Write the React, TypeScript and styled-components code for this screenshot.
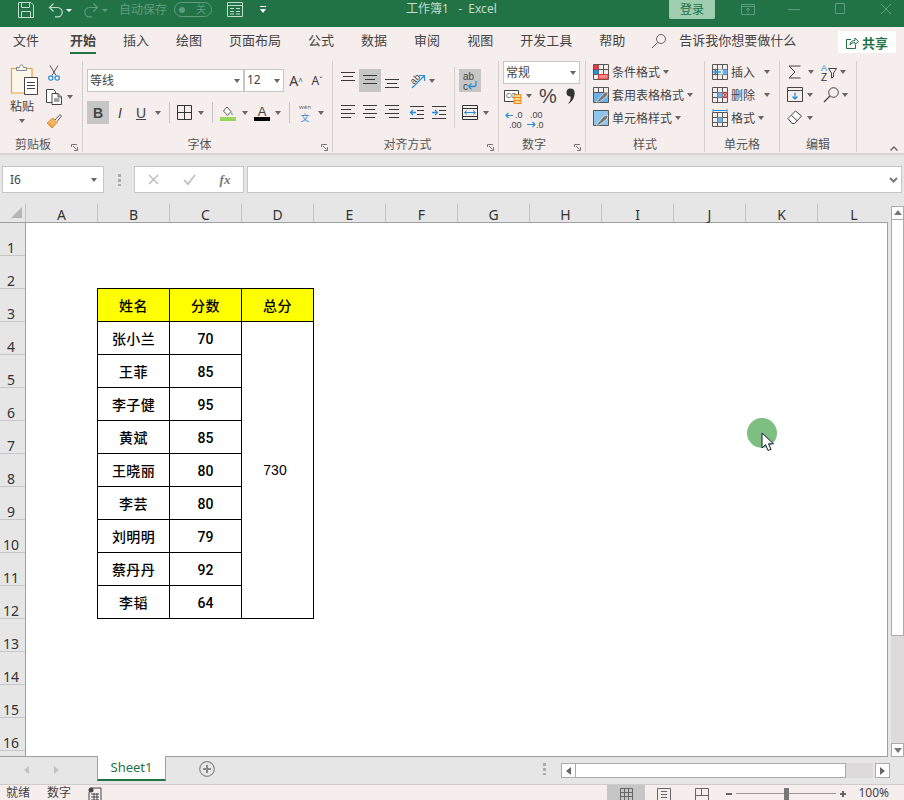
import React from "react";
import styled, { createGlobalStyle } from "styled-components";

const GREEN = "#217346";
const PINK = "#f6eded";
const GRAY = "#e6e6e6";
const LINE = "#9f9f9f";
const SOFT = "#c6c6c6";
const INK = "#3c3c3c";
const BLUE = "#2b8fd6";

const GlobalStyle = createGlobalStyle`
  html, body { margin: 0; padding: 0; background: ${GRAY}; }
  * { box-sizing: border-box; }
  body { font-family: "Noto Sans", "Noto Sans CJK SC", sans-serif; }
`;

const Page = styled.div`
  position: relative;
  width: 904px;
  height: 800px;
  overflow: hidden;
  display: flex;
  flex-direction: column;
  background: ${GRAY};
`;

const Icon = styled.svg`
  display: block;
  flex: none;
  fill: none;
  overflow: visible;
`;

/* ---------- title bar ---------- */
const TitleBar = styled.header`
  height: 27px;
  flex: none;
  display: flex;
  background: ${GREEN};
  padding-left: 18px;
`;
const Quick = styled.span<{ $ml?: number }>`
  height: 19px;
  margin-left: ${(p) => p.$ml ?? 0}px;
  display: flex;
  align-items: center;
  flex: none;
`;
const TitleCaret = styled.span<{ $ml: number; $faint?: boolean }>`
  margin: 9px 0 0 ${(p) => p.$ml}px;
  width: 0;
  height: 0;
  flex: none;
  border-left: 3px solid transparent;
  border-right: 3px solid transparent;
  border-top: 3px solid ${(p) => (p.$faint ? "#5f9b7d" : "#ffffff")};
`;
const AutoSave = styled.span`
  margin-left: 11px;
  font-size: 12px;
  line-height: 19px;
  color: #5f9b7d;
`;
const Toggle = styled.span`
  margin: 2px 0 0 7px;
  width: 38px;
  height: 15px;
  border: 1px solid #5f9b7d;
  border-radius: 8px;
  display: flex;
  align-items: center;
  justify-content: space-between;
  padding: 0 5px 0 4px;
  font-size: 10px;
  line-height: 13px;
  color: #5f9b7d;
  &::before {
    content: "";
    width: 6px;
    height: 6px;
    border-radius: 50%;
    background: #5f9b7d;
  }
`;
const CustomizeCaret = styled.span`
  margin: 6px 0 0 17px;
  width: 6px;
  height: 7px;
  flex: none;
  border-top: 1px solid #fff;
  position: relative;
  &::after {
    content: "";
    position: absolute;
    left: 0;
    top: 2px;
    border-left: 3px solid transparent;
    border-right: 3px solid transparent;
    border-top: 4px solid #fff;
  }
`;
const DocTitle = styled.span`
  margin-left: 140px;
  font-size: 12px;
  line-height: 17px;
  color: #c4dacd;
  white-space: pre;
`;
const WindowControls = styled.div`
  margin-left: auto;
  display: flex;
  align-items: flex-start;
`;
const Login = styled.span`
  width: 46px;
  height: 19px;
  background: #9fcdb0;
  border-radius: 0 0 2px 2px;
  color: ${GREEN};
  font-size: 12px;
  line-height: 19px;
  text-align: center;
`;

/* ---------- tabs ---------- */
const TabRow = styled.nav`
  height: 31px;
  flex: none;
  background: ${PINK};
  display: flex;
  padding: 0 8px 0 13px;
  align-items: flex-start;
`;
const MenuTab = styled.span<{ $active?: boolean; $mr?: number }>`
  margin-right: ${(p) => p.$mr ?? 27}px;
  height: 27px;
  font-size: 13px;
  line-height: 26px;
  color: #444;
  font-weight: ${(p) => (p.$active ? 700 : 400)};
  border-bottom: ${(p) => (p.$active ? `2px solid ${GREEN}` : "0")};
  white-space: nowrap;
`;
const Hint = styled.span`
  margin-left: 12px;
  font-size: 13px;
  line-height: 26px;
  color: #444;
`;
const ShareButton = styled.span`
  margin: 4px 0 0 auto;
  width: 58px;
  height: 22px;
  background: #fff;
  border-radius: 2px;
  display: flex;
  align-items: center;
  justify-content: center;
  gap: 3px;
  font-size: 13px;
  font-weight: 700;
  color: ${GREEN};
`;

/* ---------- ribbon ---------- */
const Ribbon = styled.section`
  height: 97px;
  flex: none;
  background: ${PINK};
  border-bottom: 2px solid #d8d4d3;
  display: flex;
  padding-top: 3px;
`;
const Group = styled.div<{ $w: number }>`
  width: ${(p) => p.$w}px;
  height: 91px;
  flex: none;
  display: flex;
  flex-direction: column;
  border-right: 1px solid #d3cfcf;
`;
const GroupBody = styled.div<{ $pt?: number; $pl?: number }>`
  flex: 1;
  min-height: 0;
  padding: ${(p) => p.$pt ?? 0}px 0 0 ${(p) => p.$pl ?? 0}px;
`;
const GroupFoot = styled.div`
  height: 15px;
  flex: none;
  display: flex;
  font-size: 12px;
  line-height: 16px;
  color: #555;
`;
const GroupName = styled.span`
  flex: 1;
  text-align: center;
`;
const Launcher = styled.span`
  width: 16px;
  padding: 7px 4px 0 5px;
`;
const Row = styled.div<{ $h?: number; $mb?: number }>`
  display: flex;
  align-items: center;
  height: ${(p) => p.$h ?? 23}px;
  margin-bottom: ${(p) => p.$mb ?? 0}px;
`;
const Btn = styled.span<{ $w: number; $on?: boolean; $ml?: number }>`
  width: ${(p) => p.$w}px;
  height: 23px;
  margin-left: ${(p) => p.$ml ?? 0}px;
  flex: none;
  display: flex;
  align-items: center;
  justify-content: center;
  background: ${(p) => (p.$on ? SOFT : "transparent")};
  color: ${INK};
`;
const Caret = styled.span<{ $w: number }>`
  width: ${(p) => p.$w}px;
  flex: none;
  display: flex;
  justify-content: center;
  &::after {
    content: "";
    border-left: 3.5px solid transparent;
    border-right: 3.5px solid transparent;
    border-top: 4px solid #666;
  }
`;
const Sep = styled.span<{ $l: number; $r: number }>`
  width: 1px;
  height: 21px;
  flex: none;
  margin: 0 ${(p) => p.$r}px 0 ${(p) => p.$l}px;
  background: ${SOFT};
`;
const Field = styled.span<{ $w: number; $ml?: number }>`
  width: ${(p) => p.$w}px;
  height: 23px;
  margin-left: ${(p) => p.$ml ?? 0}px;
  flex: none;
  background: #fff;
  border: 1px solid ${SOFT};
  display: flex;
  align-items: center;
  justify-content: space-between;
  padding: 0 3px 2px 2px;
  font-size: 12px;
  color: #444;
  &::after {
    content: "";
    margin-top: 2px;
    border-left: 3.5px solid transparent;
    border-right: 3.5px solid transparent;
    border-top: 4px solid #666;
  }
`;
const GrowLetter = styled.span<{ $size: number }>`
  font-size: ${(p) => p.$size}px;
  line-height: 1;
`;
const Glyph = styled.span<{ $bold?: boolean; $italic?: boolean; $under?: boolean }>`
  font-family: "Liberation Sans", sans-serif;
  font-size: 14px;
  font-weight: ${(p) => (p.$bold ? 700 : 400)};
  font-style: ${(p) => (p.$italic ? "italic" : "normal")};
  text-decoration: ${(p) => (p.$under ? "underline" : "none")};
  color: #444;
`;
const ClipWrap = styled.div`
  display: flex;
  height: 76px;
`;
const PasteCol = styled.div`
  width: 46px;
  padding: 3px 0 0 11px;
  flex: none;
`;
const PasteText = styled.div`
  margin: 4px 0 4px -1px;
  font-size: 12px;
  line-height: 16px;
  color: #444;
`;
const PasteCaret = styled(Caret)`
  margin-left: -1px;
`;
const ClipTools = styled.div`
  padding-top: 3px;
  display: flex;
  flex-direction: column;
  gap: 7px;
`;
const ClipRow = styled.div`
  display: flex;
  align-items: center;
  height: 17px;
`;
const AlignWrap = styled.div`
  display: flex;
`;
const AlignMain = styled.div`
  width: 117px;
  flex: none;
`;
const WrapCol = styled.div`
  margin-top: -2px;
  padding: 2px 0 0 4px;
  height: 61px;
  border-left: 1px solid #d3cfcf;
`;
const StyleRow = styled.div<{ $pl?: number }>`
  display: flex;
  align-items: center;
  height: 23px;
  padding-left: ${(p) => p.$pl ?? 7}px;
  padding-bottom: 2px;
  font-size: 12px;
  color: #444;
  white-space: nowrap;
`;
const StyleLabel = styled.span`
  margin-left: 3px;
`;
const Percent = styled.span`
  font-family: "Liberation Sans", sans-serif;
  font-size: 20px;
  color: #444;
`;
const RibbonEnd = styled.div`
  flex: 1;
  display: flex;
  justify-content: flex-end;
  padding: 85px 6px 0 0;
`;

/* ---------- formula bar ---------- */
const FormulaBar = styled.div`
  height: 49px;
  flex: none;
  padding: 11px 2px 0;
  display: flex;
  align-items: flex-start;
`;
const Box = styled.div<{ $w?: number; $ml?: number }>`
  height: 27px;
  ${(p) => (p.$w ? `width: ${p.$w}px; flex: none;` : "flex: 1;")}
  margin-left: ${(p) => p.$ml ?? 0}px;
  background: #fff;
  border: 1px solid ${SOFT};
  display: flex;
  align-items: center;
`;
const NameText = styled.span`
  margin-left: 7px;
  font-size: 12px;
  color: #444;
`;
const BoxCaret = styled(Caret)`
  margin-left: auto;
`;
const BoxChevron = styled.span`
  margin-left: auto;
  padding-right: 3px;
`;
const Dots = styled.span<{ $ml: number }>`
  margin-left: ${(p) => p.$ml}px;
  width: 3px;
  height: 13px;
  flex: none;
  background: radial-gradient(circle at 50% 50%, #aaa 1.4px, transparent 1.6px) 0 0 / 3px 5px repeat-y;
`;
const FormulaDots = styled(Dots)`
  margin-top: 7px;
`;
const FxSlot = styled.span<{ $w: number }>`
  width: ${(p) => p.$w}px;
  display: flex;
  justify-content: center;
  flex: none;
`;
const FxText = styled.span`
  font-family: "Liberation Serif", serif;
  font-style: italic;
  font-size: 13px;
  font-weight: 700;
  color: #777;
`;

/* ---------- grid ---------- */
const Work = styled.div`
  height: 553px;
  flex: none;
  display: flex;
`;
const GridSide = styled.div`
  width: 888px;
  flex: none;
  display: flex;
  flex-direction: column;
  border-bottom: 1px solid ${LINE};
`;
const ColHeads = styled.div`
  height: 19px;
  flex: none;
  display: flex;
  border-bottom: 1px solid ${LINE};
`;
const Corner = styled.div`
  width: 26px;
  flex: none;
  padding: 3px 0 0 11px;
  border-right: 1px solid ${SOFT};
`;
const ColHead = styled.div<{ $last?: boolean }>`
  width: 72px;
  flex: none;
  text-align: center;
  font-size: 14px;
  line-height: 22px;
  color: #333;
  border-right: ${(p) => (p.$last ? "0" : `1px solid ${SOFT}`)};
`;
const GridBody = styled.div`
  flex: 1;
  min-height: 0;
  display: flex;
  overflow: hidden;
`;
const RowHeads = styled.div`
  width: 26px;
  flex: none;
  border-right: 1px solid ${LINE};
`;
const RowHead = styled.div`
  height: 33px;
  border-bottom: 1px solid ${SOFT};
  display: flex;
  align-items: flex-end;
  justify-content: center;
  padding-right: 3px;
  font-size: 14px;
  line-height: 15px;
  color: #333;
`;
const Sheet = styled.main`
  flex: 1;
  background: #fff;
  border-right: 1px solid ${LINE};
  padding: 65px 0 0 71px;
`;
const DataTable = styled.div`
  width: 217px;
  display: grid;
  grid-template-columns: repeat(3, 71px);
  grid-auto-rows: 32px;
  gap: 1px;
  padding: 1px;
  background: #000;
`;
const Cell = styled.div<{ $head?: boolean; $num?: boolean }>`
  background: ${(p) => (p.$head ? "#ffff00" : "#fff")};
  display: flex;
  align-items: center;
  justify-content: center;
  padding-top: ${(p) => (p.$num ? 1 : 0)}px;
  font-family: ${(p) =>
    p.$num ? 'Roboto, "Liberation Sans", sans-serif' : '"Noto Sans CJK SC", sans-serif'};
  font-size: 14px;
  font-weight: 500;
  letter-spacing: ${(p) => (p.$num ? 0 : "0.4px")};
  color: #000;
`;
const TotalCell = styled.div`
  grid-column: 3;
  grid-row: 2 / span 9;
  background: #fff;
  display: flex;
  align-items: center;
  justify-content: center;
  padding-right: 5px;
  font-family: "Liberation Sans", sans-serif;
  font-size: 14px;
  color: #000;
`;
const VScroll = styled.div`
  width: 13px;
  margin-left: 3px;
  flex: none;
  padding-top: 2px;
  display: flex;
  flex-direction: column;
`;
const VBtn = styled.div`
  height: 14px;
  flex: none;
  background: #fff;
  border: 1px solid #ababab;
  display: flex;
  align-items: center;
  justify-content: center;
  color: #777;
`;
const VThumb = styled.div`
  height: 416px;
  flex: none;
  background: #fff;
  border: 1px solid #ababab;
  border-width: 0 1px 1px;
`;
const VTrack = styled.div`
  flex: 1;
  background: #dcdadb;
`;

/* ---------- sheet tabs ---------- */
const SheetBar = styled.div`
  height: 28px;
  flex: none;
  display: flex;
  align-items: flex-start;
  border-bottom: 1px solid #cfcbca;
`;
const SheetNav = styled.div`
  width: 97px;
  flex: none;
  display: flex;
  justify-content: center;
  gap: 22px;
  padding: 9px 13px 0 0;
`;
const SheetTab = styled.div`
  width: 69px;
  height: 25px;
  margin-top: -1px;
  flex: none;
  background: #fff;
  border: 1px solid ${LINE};
  border-width: 0 1px;
  border-bottom: 2px solid ${GREEN};
  color: ${GREEN};
  font-size: 13px;
  line-height: 23px;
  text-align: center;
`;
const PlusCircle = styled.span`
  margin: 4px 0 0 33px;
  flex: none;
`;
const HScroll = styled.div`
  margin: 6px 14px 0 0;
  width: 329px;
  height: 15px;
  flex: none;
  display: flex;
`;
const HBtn = styled.span`
  width: 15px;
  flex: none;
  background: #fff;
  border: 1px solid #ababab;
  display: flex;
  align-items: center;
  justify-content: center;
`;
const HThumb = styled.span`
  width: 270px;
  flex: none;
  background: #fff;
  border: 1px solid #ababab;
  border-left-width: 0;
`;
const HTrack = styled.span`
  flex: 1;
  margin-right: 2px;
  background: #dcdadb;
`;
const SheetDots = styled(Dots)`
  margin: 5px 15px 0 auto;
`;

/* ---------- status bar ---------- */
const StatusBar = styled.footer`
  flex: 1;
  min-height: 0;
  overflow: hidden;
  background: ${PINK};
  display: flex;
  padding-left: 6px;
  font-size: 12px;
  line-height: 15px;
  color: #444;
`;
const StatusItem = styled.span<{ $ml?: number }>`
  margin-left: ${(p) => p.$ml ?? 0}px;
`;
const ViewSlot = styled.span<{ $on?: boolean; $first?: boolean }>`
  width: 38px;
  margin-left: ${(p) => (p.$first ? "auto" : "0")};
  flex: none;
  display: flex;
  justify-content: center;
  padding-top: 3px;
  background: ${(p) => (p.$on ? SOFT : "transparent")};
`;
const ZoomMark = styled.span<{ $ml: number; $plus?: boolean }>`
  margin: 8px 0 0 ${(p) => p.$ml}px;
  width: 6px;
  height: 2px;
  background: #666;
  flex: none;
  position: relative;
  &::after {
    content: "";
    display: ${(p) => (p.$plus ? "block" : "none")};
    position: absolute;
    left: 2px;
    top: -2px;
    width: 2px;
    height: 6px;
    background: #666;
  }
`;
const ZoomTrack = styled.span`
  margin: 8px 0 0 4px;
  width: 100px;
  height: 1px;
  background: #999;
  flex: none;
  position: relative;
`;
const ZoomThumb = styled.span`
  position: absolute;
  left: 48px;
  top: -5px;
  width: 5px;
  height: 12px;
  background: #777;
`;
const ZoomValue = styled.span`
  margin: 0 15px 0 12px;
  font-size: 12px;
`;

/* ---------- recorded pointer over the sheet ---------- */
const Pointer = styled.div`
  position: absolute;
  left: 747px;
  top: 418px;
  width: 30px;
  height: 30px;
  border-radius: 50%;
  background: #7dbf80;
`;
const Arrow = styled(Icon)`
  position: absolute;
  left: 761px;
  top: 432px;
`;

/* ---------- drawings ---------- */
const tq = "#c5dacf";
const faint = "#5f9b7d";

const SaveIcon = () => (
  <Icon width={16} height={16} viewBox="0 0 16 16" stroke={tq}>
    <path d="M.5.5h12.500l2.500 2.500v12.500H.5z" />
    <path d="M3.500.5v5h8v-5M3.500 15.500v-6h9v6" />
  </Icon>
);
const UndoIcon = ({ color = tq, flip = false }: { color?: string; flip?: boolean }) => (
  <Icon width={16} height={16} viewBox="0 0 16 16" stroke={color} strokeWidth={1.2}
    transform={flip ? "scale(-1 1)" : undefined}>
    <path d="M5.500 1.500 1.500 5.500l4 4M2 5.500h7.500a4.700 4.700 0 0 1 0 9.400H7" />
  </Icon>
);
const LayoutIcon = () => (
  <Icon width={16} height={15} viewBox="0 0 16 15" stroke={tq}>
    <path d="M.5.500h15v14H.5zM.5 3.500h15M3 6.500h4M9 6.500h4M3 9.500h4M9 9.500h4M3 12h4M9 12h4" />
  </Icon>
);
const RibbonModeIcon = () => (
  <Icon width={14} height={13} viewBox="0 0 14 13" stroke={faint}>
    <path d="M.5 1.500h13v10H.5zM.5 3.500h13M7 10V5.500M5 7l2-2 2 2" />
  </Icon>
);
const MinIcon = () => (
  <Icon width={14} height={19} viewBox="0 0 14 19" stroke={faint}><path d="M1 9.500h12" /></Icon>
);
const MaxIcon = () => (
  <Icon width={14} height={19} viewBox="0 0 14 19" stroke={faint}><path d="M2.500 3.500h9v10h-9z" /></Icon>
);
const CloseIcon = () => (
  <Icon width={14} height={19} viewBox="0 0 14 19" stroke={faint}><path d="m2 4 10 10M12 4 2 14" /></Icon>
);
const SearchIcon = () => (
  <Icon width={16} height={16} viewBox="0 0 16 16" stroke="#666" style={{ marginTop: 6 }}>
    <circle cx="10" cy="6" r="4.500" />
    <path d="M6.500 9.500 1 15" />
  </Icon>
);
const ShareIcon = () => (
  <Icon width={13} height={13} viewBox="0 0 13 13" stroke={GREEN}>
    <path d="M5 3.500H.5v9h9V9M4 9c0-3 2-4.500 5-4.500V2l3.500 3.500L9 8.500V6.500C6.500 6.500 5 7.500 4 9z" />
  </Icon>
);
const PasteIcon = () => (
  <Icon width={28} height={31} viewBox="0 0 28 31">
    <path d="M.5 4.500h20.500v24.500H.5z" stroke="#e8a33d" strokeWidth={1.2} fill="#fdf6ea" />
    <path d="M5.500 6.500V3.500h3c0-3.500 4-3.500 4 0h3v3z" stroke="#888" fill="#f4f4f4" />
    <path d="M13.500 13.500h13v17h-13z" stroke="#444" fill="#fff" />
    <path d="M16 18.500h8M16 21.500h8M16 24.500h8" stroke="#444" />
  </Icon>
);
const CutIcon = () => (
  <Icon width={12} height={16} viewBox="0 0 12 16" style={{ marginLeft: 2 }}>
    <path d="M2 .5 8 10.500M10 .5 4 10.500" stroke="#555" />
    <circle cx="2.800" cy="13" r="2.200" stroke={BLUE} strokeWidth={1.2} />
    <circle cx="9.200" cy="13" r="2.200" stroke={BLUE} strokeWidth={1.2} />
  </Icon>
);
const CopyIcon = () => (
  <Icon width={16} height={16} viewBox="0 0 16 16" stroke="#444">
    <path d="M.5.500h7l2 2v11H.5z" fill="#fff" />
    <path d="M6 4.500h6l3.500 3.500v7.500H6z" fill="#fff" />
    <path d="M8 10h5.500M8 12h5.500M12 4.500V8h3.500" />
  </Icon>
);
const PainterIcon = () => (
  <Icon width={16} height={16} viewBox="0 0 16 16">
    <path d="M1 10 7 5l4 4.500L6 15z" fill="#f3b463" stroke="#e68a1e" />
    <path d="m9 7 5-5.500 1.500 1.500L11 8.500" fill="#fff" stroke="#555" />
    <path d="M3 12l2-1M5 14l2-2" stroke="#e68a1e" />
  </Icon>
);
const LauncherIcon = () => (
  <Icon width={7} height={7} viewBox="0 0 7 7" stroke="#777">
    <path d="M.5 3V.5H6" />
    <path d="M2 2l3.500 3.500M6.500 3v3.500H3" />
  </Icon>
);
const BorderIcon = () => (
  <Icon width={15} height={15} viewBox="0 0 15 15" stroke="#333">
    <path d="M.5.500h14v14H.5zM7.500.5v14M.5 7.500h14" />
  </Icon>
);
const FillIcon = () => (
  <Icon width={16} height={16} viewBox="0 0 16 16">
    <path d="M3.500 6 7 2l4 4.500-3.500 4z" stroke="#555" fill="#fff" />
    <path d="M11.500 7c1 1.500 1.500 2 1 3-1 .5-1.500-1-1-3z" fill={BLUE} />
    <path d="M0 12h16v4H0z" fill="#9bd45d" />
  </Icon>
);
const ColorIcon = () => (
  <Icon width={16} height={16} viewBox="0 0 16 16">
    <text x="8" y="11" textAnchor="middle" fontFamily="Liberation Sans" fontSize="13" fill="#444">A</text>
    <path d="M0 12h16v4H0z" fill="#000" />
  </Icon>
);
const WenIcon = () => (
  <Icon width={16} height={20} viewBox="0 0 16 20">
    <text x="8" y="6" textAnchor="middle" fontFamily="Noto Sans" fontSize="6" fill="#666">wén</text>
    <text x="8" y="18" textAnchor="middle" fontFamily="Noto Sans CJK SC" fontSize="9" fill={BLUE}>文</text>
  </Icon>
);
const Lines = ({ rows }: { rows: [number, number, number][] }) => (
  <Icon width={14} height={17} viewBox="0 0 14 17" stroke="#3a3a3a">
    {rows.map(([a, b, y]) => (
      <path key={`${a}${y}`} d={`M${a} ${y + 0.5}H${b}`} />
    ))}
  </Icon>
);
const alignTop: [number, number, number][] = [[0, 14, 0], [2, 12, 4], [0, 14, 8]];
const alignMid: [number, number, number][] = [[0, 14, 3], [2, 12, 7], [0, 14, 11]];
const alignBot: [number, number, number][] = [[0, 14, 7], [2, 12, 11], [0, 14, 15]];
const alignLeft: [number, number, number][] = [[0, 14, 1], [0, 10, 5], [0, 14, 9], [0, 10, 13]];
const alignCenter: [number, number, number][] = [[0, 14, 1], [2, 12, 5], [0, 14, 9], [2, 12, 13]];
const alignRight: [number, number, number][] = [[0, 14, 1], [4, 14, 5], [0, 14, 9], [4, 14, 13]];

const OrientIcon = () => (
  <Icon width={17} height={19} viewBox="0 0 17 19">
    <text x="1" y="11" transform="rotate(-45 6 8)" fontFamily="Liberation Sans" fontSize="9" fill="#444">ab</text>
    <path d="M3 17 15 5M10 4.500h5.500V10" stroke={BLUE} strokeWidth={1.2} />
  </Icon>
);
const IndentIcon = ({ inc = false }: { inc?: boolean }) => (
  <Icon width={14} height={16} viewBox="0 0 14 16">
    <path d="M0 1.500h14M7 5.500h7M7 9.500h7M0 13.500h14" stroke="#3a3a3a" />
    <path d={inc ? "M0 7.500h5M3 5l2.500 2.500L3 10" : "M6 7.500H1M3 5 .5 7.500 3 10"} stroke={BLUE} strokeWidth={1.3} />
  </Icon>
);
const WrapIcon = () => (
  <Icon width={16} height={20} viewBox="0 0 16 20">
    <text x="1" y="9" fontFamily="Liberation Sans" fontSize="10" fill="#444">ab</text>
    <text x="1" y="19" fontFamily="Liberation Sans" fontSize="10" fill="#444">c</text>
    <path d="M14 10v3.500a2 2 0 0 1-2 2H7M9.500 12.500l-3 3 3 3" stroke={BLUE} strokeWidth={1.3} />
  </Icon>
);
const MergeIcon = () => (
  <Icon width={16} height={15} viewBox="0 0 16 15">
    <path d="M.5.500h15v14H.5zM.5 3.500h15M.5 11.500h15" stroke="#333" />
    <path d="M2.500 7.500h11M5 5.500l-2.500 2 2.500 2M11 5.500l2.500 2-2.500 2" stroke={BLUE} />
  </Icon>
);
const AccountIcon = () => (
  <Icon width={18} height={17} viewBox="0 0 18 17">
    <path d="M.5 2.500h14v11H.5z" stroke="#444" fill="#fff" />
    <text x="2" y="10" fontFamily="Liberation Sans" fontSize="7" fill="#444">CC</text>
    <path d="M10 6.500h7v9h-7z" fill="#fbd88a" stroke="#e68a1e" />
    <path d="M10 9.500h7M10 12.500h7" stroke="#e68a1e" />
  </Icon>
);
const CommaIcon = () => (
  <Icon width={9} height={16} viewBox="0 0 9 16">
    <circle cx="4.500" cy="4.500" r="4" fill="#333" />
    <path d="M8.500 4.500C9 9.500 6 14 2 16c2.500-3 3-6 2.500-8z" fill="#333" />
  </Icon>
);
const DecimalIcon = ({ inc = false }: { inc?: boolean }) => (
  <Icon width={18} height={19} viewBox="0 0 18 19">
    <text x={inc ? 10 : 4} y="8" fontFamily="Liberation Sans" fontSize="9" fill="#444">{inc ? ".0" : ".00"}</text>
    <text x={inc ? 4 : 10} y="18" fontFamily="Liberation Sans" fontSize="9" fill="#444">{inc ? ".00" : ".0"}</text>
    <path d={inc ? "M8 5.500H1M3.500 3 1 5.500 3.500 8" : "M1 14.500h8M6.500 12 9 14.500 6.500 17"} stroke={BLUE} strokeWidth={1.2} />
  </Icon>
);
const TableBase = ({ children }: { children: React.ReactNode }) => (
  <Icon width={16} height={16} viewBox="0 0 16 16">
    <path d="M.5.500h15v15H.5zM.5 5.500h15M.5 10.500h15M5.500.5v15M10.500.5v15" stroke="#555" />
    {children}
  </Icon>
);
const CondIcon = () => (
  <TableBase>
    <path d="M1 1h4.500v4.500H1z" fill="#ee3a3a" />
    <path d="M1 6h4.500v4.500H1z" fill={BLUE} />
    <path d="M5.500 10.500H15V15H5.500z" fill="#f48b8b" stroke="#d33" />
  </TableBase>
);
const TableStyleIcon = () => (
  <TableBase>
    <path d="M1 6h14v9H1z" fill="#6db2e8" />
    <path d="M3 15l8-9 3-1 1 1-1 3-8 6z" fill="#777" stroke="#fff" strokeWidth={0.6} />
  </TableBase>
);
const CellStyleIcon = () => (
  <Icon width={16} height={16} viewBox="0 0 16 16">
    <path d="M.5.500h15v15H.5z" fill="#8fc4ee" stroke="#555" />
    <path d="M3 15l8-9 3-1 1 1-1 3-8 6z" fill="#777" stroke="#fff" strokeWidth={0.6} />
  </Icon>
);
const InsertIcon = () => (
  <TableBase>
    <path d="M6 5.500h5v5H6z" fill="#fff" />
    <path d="M10.500 5.500h5v5h-5z" fill="#6db2e8" />
    <path d="M9 8H2M4.500 5.500 2 8l2.500 2.500" stroke={BLUE} strokeWidth={1.3} />
  </TableBase>
);
const DeleteIcon = () => (
  <TableBase>
    <path d="M5.500 5.500h5v5h-5z" fill="#6db2e8" />
    <path d="m10.500 5 5 6M15.500 5l-5 6" stroke="#e5484d" strokeWidth={1.4} />
  </TableBase>
);
const FormatIcon = () => (
  <Icon width={16} height={18} viewBox="0 0 16 18">
    <path d="M.5 3.500h15v14H.5zM.5 8.500h15M.5 13.500h15M5.500 3.500v14M10.500 3.500v14" stroke="#555" />
    <path d="M5.500 8.500h5v5h-5z" fill="#6db2e8" />
    <path d="M1 1.500h14M1 0v3M15 0v3" stroke={BLUE} />
  </Icon>
);
const SigmaIcon = () => (
  <Icon width={13} height={14} viewBox="0 0 13 14" stroke="#444">
    <path d="M12.500 1H1l6 6-6 6h11.500" />
  </Icon>
);
const SortIcon = () => (
  <Icon width={16} height={20} viewBox="0 0 16 20">
    <text x="0" y="9" fontFamily="Liberation Sans" fontSize="9" fill={BLUE}>A</text>
    <text x="0" y="19" fontFamily="Liberation Sans" fontSize="10" fill="#333">Z</text>
    <path d="M7.500 6.500h8L12.500 11v4l-2 1v-5z" stroke="#444" />
  </Icon>
);
const FillDownIcon = () => (
  <Icon width={16} height={15} viewBox="0 0 16 15">
    <path d="M.5.500h15v14H.5zM.5 3.500h15" stroke="#444" />
    <path d="M8 5.500v6.500M5.500 9.500 8 12l2.500-2.500" stroke={BLUE} strokeWidth={1.3} />
  </Icon>
);
const FindIcon = () => (
  <Icon width={16} height={16} viewBox="0 0 16 16" stroke="#444">
    <circle cx="10.500" cy="5.500" r="4.800" />
    <path d="M7 9 1 15" strokeWidth={1.3} />
  </Icon>
);
const EraserIcon = () => (
  <Icon width={16} height={15} viewBox="0 0 16 15" stroke="#444">
    <path d="M1 8.500 8.500 1l6 5-7 7.500H5z" fill="#fff" />
    <path d="m4.500 5.500 6 5.500" />
  </Icon>
);
const CornerIcon = () => (
  <Icon width={11} height={11} viewBox="0 0 11 11">
    <path d="M11 0v11H0z" fill="#b5b5b5" />
  </Icon>
);
const Tri = ({ dir, color = "#777" }: { dir: "l" | "r" | "u" | "d"; color?: string }) => {
  const d = { l: "M6 0v8L1 4z", r: "M1 0v8l5-4z", u: "M0 6h8L4 1z", d: "M0 2h8L4 7z" }[dir];
  return (
    <Icon width={8} height={8} viewBox="0 0 8 8">
      <path d={d} fill={color} />
    </Icon>
  );
};
const PlusIcon = () => (
  <Icon width={16} height={16} viewBox="0 0 16 16">
    <circle cx="8" cy="8" r="7.300" stroke="#8a8a8a" strokeWidth={1.2} />
    <path d="M8 4v8M4 8h8" stroke="#8a8a8a" strokeWidth={2} />
  </Icon>
);
const MacroIcon = () => (
  <Icon width={13} height={16} viewBox="0 0 13 16" style={{ marginTop: 2, marginLeft: 17 }}>
    <circle cx="3" cy="3" r="2.500" fill="#444" />
    <path d="M3 1h10v15H1V5" stroke="#444" fill="none" />
    <path d="M3 7h8M3 10h8M3 13h8M6 6v9M9 6v9" stroke="#444" />
  </Icon>
);
const NormalView = () => (
  <Icon width={13} height={13} viewBox="0 0 13 13" stroke="#666">
    <path d="M.5.500h12v12H.5zM.5 4.500h12M.5 8.500h12M4.500.5v12M8.500.5v12" />
  </Icon>
);
const PageView = () => (
  <Icon width={14} height={13} viewBox="0 0 14 13" stroke="#666">
    <path d="M.5.500h13v12H.5zM4 3.500h6M4 6.500h6M4 9.500h6" />
  </Icon>
);
const BreakView = () => (
  <Icon width={14} height={13} viewBox="0 0 14 13" stroke="#666">
    <path d="M.5.500h13v12H.5zM.5 7.500h13M6.500.5v7" />
  </Icon>
);

const columns = ["A", "B", "C", "D", "E", "F", "G", "H", "I", "J", "K", "L"];
const people: [string, number][] = [
  ["张小兰", 70],
  ["王菲", 85],
  ["李子健", 95],
  ["黄斌", 85],
  ["王晓丽", 80],
  ["李芸", 80],
  ["刘明明", 79],
  ["蔡丹丹", 92],
  ["李韬", 64],
];
const menu = ["插入", "绘图", "页面布局", "公式", "数据", "审阅", "视图", "开发工具"];

const App = () => (
  <Page>
    <GlobalStyle />
    <TitleBar>
      <Quick><SaveIcon /></Quick>
      <Quick $ml={14}><UndoIcon /></Quick>
      <TitleCaret $ml={2} />
      <Quick $ml={11}><UndoIcon color={faint} flip /></Quick>
      <TitleCaret $ml={3} $faint />
      <AutoSave>自动保存</AutoSave>
      <Toggle>关</Toggle>
      <Quick $ml={15}><LayoutIcon /></Quick>
      <CustomizeCaret />
      <DocTitle>工作簿1   -  Excel</DocTitle>
      <WindowControls>
        <Login>登录</Login>
        <Quick $ml={26}><RibbonModeIcon /></Quick>
        <Quick $ml={32}><MinIcon /></Quick>
        <Quick $ml={32}><MaxIcon /></Quick>
        <Quick $ml={32}><CloseIcon /></Quick>
        <Quick $ml={11} />
      </WindowControls>
    </TitleBar>

    <TabRow>
      <MenuTab $mr={31}>文件</MenuTab>
      <MenuTab $active>开始</MenuTab>
      {menu.map((m) => <MenuTab key={m}>{m}</MenuTab>)}
      <MenuTab $mr={26}>帮助</MenuTab>
      <SearchIcon />
      <Hint>告诉我你想要做什么</Hint>
      <ShareButton><ShareIcon />共享</ShareButton>
    </TabRow>

    <Ribbon>
      <Group $w={83}>
        <GroupBody>
          <ClipWrap>
            <PasteCol>
              <PasteIcon />
              <PasteText>粘贴</PasteText>
              <PasteCaret $w={24} />
            </PasteCol>
            <ClipTools>
              <ClipRow><CutIcon /></ClipRow>
              <ClipRow><CopyIcon /><Caret $w={16} /></ClipRow>
              <ClipRow><PainterIcon /></ClipRow>
            </ClipTools>
          </ClipWrap>
        </GroupBody>
        <GroupFoot><GroupName>剪贴板</GroupName><Launcher><LauncherIcon /></Launcher></GroupFoot>
      </Group>

      <Group $w={250}>
        <GroupBody $pt={8} $pl={4}>
          <Row $mb={9}>
            <Field $w={157}>等线</Field>
            <Field $w={40}>12</Field>
            <Btn $w={20} $ml={2}><GrowLetter $size={14}>A</GrowLetter><GrowLetter $size={8}>^</GrowLetter></Btn>
            <Btn $w={22}><GrowLetter $size={12}>A</GrowLetter><GrowLetter $size={8}>ˇ</GrowLetter></Btn>
          </Row>
          <Row>
            <Btn $w={22} $on><Glyph $bold>B</Glyph></Btn>
            <Btn $w={22}><Glyph $italic>I</Glyph></Btn>
            <Btn $w={20}><Glyph $under>U</Glyph></Btn>
            <Caret $w={14} />
            <Sep $l={4} $r={4} />
            <Btn $w={21}><BorderIcon /></Btn>
            <Caret $w={12} />
            <Sep $l={5} $r={4} />
            <Btn $w={22}><FillIcon /></Btn>
            <Caret $w={12} />
            <Btn $w={22}><ColorIcon /></Btn>
            <Caret $w={10} />
            <Sep $l={6} $r={4} />
            <Btn $w={22}><WenIcon /></Btn>
            <Caret $w={10} />
          </Row>
        </GroupBody>
        <GroupFoot><GroupName>字体</GroupName><Launcher><LauncherIcon /></Launcher></GroupFoot>
      </Group>

      <Group $w={166}>
        <GroupBody $pt={8} $pl={4}>
          <AlignWrap>
            <AlignMain>
              <Row $mb={9}>
                <Btn $w={22}><Lines rows={alignTop} /></Btn>
                <Btn $w={22} $on><Lines rows={alignMid} /></Btn>
                <Btn $w={22}><Lines rows={alignBot} /></Btn>
                <Btn $w={22} $ml={3}><OrientIcon /></Btn>
                <Caret $w={8} />
              </Row>
              <Row>
                <Btn $w={22}><Lines rows={alignLeft} /></Btn>
                <Btn $w={22}><Lines rows={alignCenter} /></Btn>
                <Btn $w={22}><Lines rows={alignRight} /></Btn>
                <Btn $w={22} $ml={3}><IndentIcon /></Btn>
                <Btn $w={22}><IndentIcon inc /></Btn>
              </Row>
            </AlignMain>
            <WrapCol>
              <Row $mb={9}><Btn $w={22} $on><WrapIcon /></Btn></Row>
              <Row><Btn $w={22}><MergeIcon /></Btn><Caret $w={10} /></Row>
            </WrapCol>
          </AlignWrap>
        </GroupBody>
        <GroupFoot><GroupName>对齐方式</GroupName><Launcher><LauncherIcon /></Launcher></GroupFoot>
      </Group>

      <Group $w={87}>
        <GroupBody $pl={4}>
          <Field $w={77}>常规</Field>
          <Row $h={24}>
            <Btn $w={20}><AccountIcon /></Btn>
            <Caret $w={12} />
            <Btn $w={24} $ml={1}><Percent>%</Percent></Btn>
            <Btn $w={20}><CommaIcon /></Btn>
          </Row>
          <Row $h={22}>
            <Btn $w={21}><DecimalIcon inc /></Btn>
            <Btn $w={22}><DecimalIcon /></Btn>
          </Row>
        </GroupBody>
        <GroupFoot><GroupName>数字</GroupName><Launcher><LauncherIcon /></Launcher></GroupFoot>
      </Group>

      <Group $w={119}>
        <GroupBody>
          <StyleRow><CondIcon /><StyleLabel>条件格式</StyleLabel><Caret $w={12} /></StyleRow>
          <StyleRow><TableStyleIcon /><StyleLabel>套用表格格式</StyleLabel><Caret $w={12} /></StyleRow>
          <StyleRow><CellStyleIcon /><StyleLabel>单元格样式</StyleLabel><Caret $w={12} /></StyleRow>
        </GroupBody>
        <GroupFoot><GroupName>样式</GroupName></GroupFoot>
      </Group>

      <Group $w={75}>
        <GroupBody>
          <StyleRow><InsertIcon /><StyleLabel>插入</StyleLabel><Caret $w={24} /></StyleRow>
          <StyleRow><DeleteIcon /><StyleLabel>删除</StyleLabel><Caret $w={24} /></StyleRow>
          <StyleRow><FormatIcon /><StyleLabel>格式</StyleLabel><Caret $w={12} /></StyleRow>
        </GroupBody>
        <GroupFoot><GroupName>单元格</GroupName></GroupFoot>
      </Group>

      <Group $w={77}>
        <GroupBody>
          <StyleRow $pl={8}><SigmaIcon /><Caret $w={20} /><Btn $w={16}><SortIcon /></Btn><Caret $w={12} /></StyleRow>
          <StyleRow><FillDownIcon /><Caret $w={14} /><Btn $w={21} $ml={3}><FindIcon /></Btn><Caret $w={8} /></StyleRow>
          <StyleRow><EraserIcon /><Caret $w={14} /></StyleRow>
        </GroupBody>
        <GroupFoot><GroupName>编辑</GroupName></GroupFoot>
      </Group>

      <RibbonEnd>
        <Icon width={8} height={5} viewBox="0 0 8 5" stroke="#666" strokeWidth={1.4}>
          <path d="M.5 4.500 4 1l3.500 3.500" />
        </Icon>
      </RibbonEnd>
    </Ribbon>

    <FormulaBar>
      <Box $w={102}>
        <NameText>I6</NameText>
        <BoxCaret $w={18} />
      </Box>
      <FormulaDots $ml={14} />
      <Box $w={110} $ml={13}>
        <FxSlot $w={36}><Icon width={11} height={11} viewBox="0 0 11 11" stroke="#bbb" strokeWidth={1.4}><path d="m1 1 9 9M10 1l-9 9" /></Icon></FxSlot>
        <FxSlot $w={36}><Icon width={13} height={11} viewBox="0 0 13 11" stroke="#c4c4c4" strokeWidth={2}><path d="m1 6 4 4 7-9" /></Icon></FxSlot>
        <FxSlot $w={36}><FxText>fx</FxText></FxSlot>
      </Box>
      <Box $ml={3}>
        <BoxChevron>
          <Icon width={9} height={6} viewBox="0 0 9 6" stroke="#777" strokeWidth={2}>
            <path d="m1 1 3.500 3.500L8 1" />
          </Icon>
        </BoxChevron>
      </Box>
    </FormulaBar>

    <Work>
      <GridSide>
        <ColHeads>
          <Corner><CornerIcon /></Corner>
          {columns.map((c, i) => <ColHead key={c} $last={i === 11}>{c}</ColHead>)}
        </ColHeads>
        <GridBody>
          <RowHeads>
            {Array.from({ length: 16 }, (_, i) => <RowHead key={i}>{i + 1}</RowHead>)}
          </RowHeads>
          <Sheet>
            <DataTable>
              <Cell $head>姓名</Cell>
              <Cell $head>分数</Cell>
              <Cell $head>总分</Cell>
              {people.map(([name, score]) => (
                <React.Fragment key={name}>
                  <Cell>{name}</Cell>
                  <Cell $num>{score}</Cell>
                </React.Fragment>
              ))}
              <TotalCell>730</TotalCell>
            </DataTable>
          </Sheet>
        </GridBody>
      </GridSide>
      <VScroll>
        <VBtn><Tri dir="u" /></VBtn>
        <VThumb />
        <VTrack />
        <VBtn><Tri dir="d" /></VBtn>
      </VScroll>
    </Work>

    <SheetBar>
      <SheetNav><Tri dir="l" color="#c2c2c2" /><Tri dir="r" color="#c2c2c2" /></SheetNav>
      <SheetTab>Sheet1</SheetTab>
      <PlusCircle><PlusIcon /></PlusCircle>
      <SheetDots $ml={0} />
      <HScroll>
        <HBtn><Tri dir="l" color="#666" /></HBtn>
        <HThumb />
        <HTrack />
        <HBtn><Tri dir="r" color="#666" /></HBtn>
      </HScroll>
    </SheetBar>

    <StatusBar>
      <StatusItem>就绪</StatusItem>
      <StatusItem $ml={17}>数字</StatusItem>
      <MacroIcon />
      <ViewSlot $on $first><NormalView /></ViewSlot>
      <ViewSlot><PageView /></ViewSlot>
      <ViewSlot><BreakView /></ViewSlot>
      <ZoomMark $ml={5} />
      <ZoomTrack><ZoomThumb /></ZoomTrack>
      <ZoomMark $ml={4} $plus />
      <ZoomValue>100%</ZoomValue>
    </StatusBar>

    <Pointer />
    <Arrow width={13} height={21} viewBox="0 0 13 21">
      <path d="M1 1v15l3.500-3.500L7 18.500l3-1.200-2.500-5.500H12.500z" fill="#fff" stroke="#111a3a" />
    </Arrow>
  </Page>
);

export default App;
